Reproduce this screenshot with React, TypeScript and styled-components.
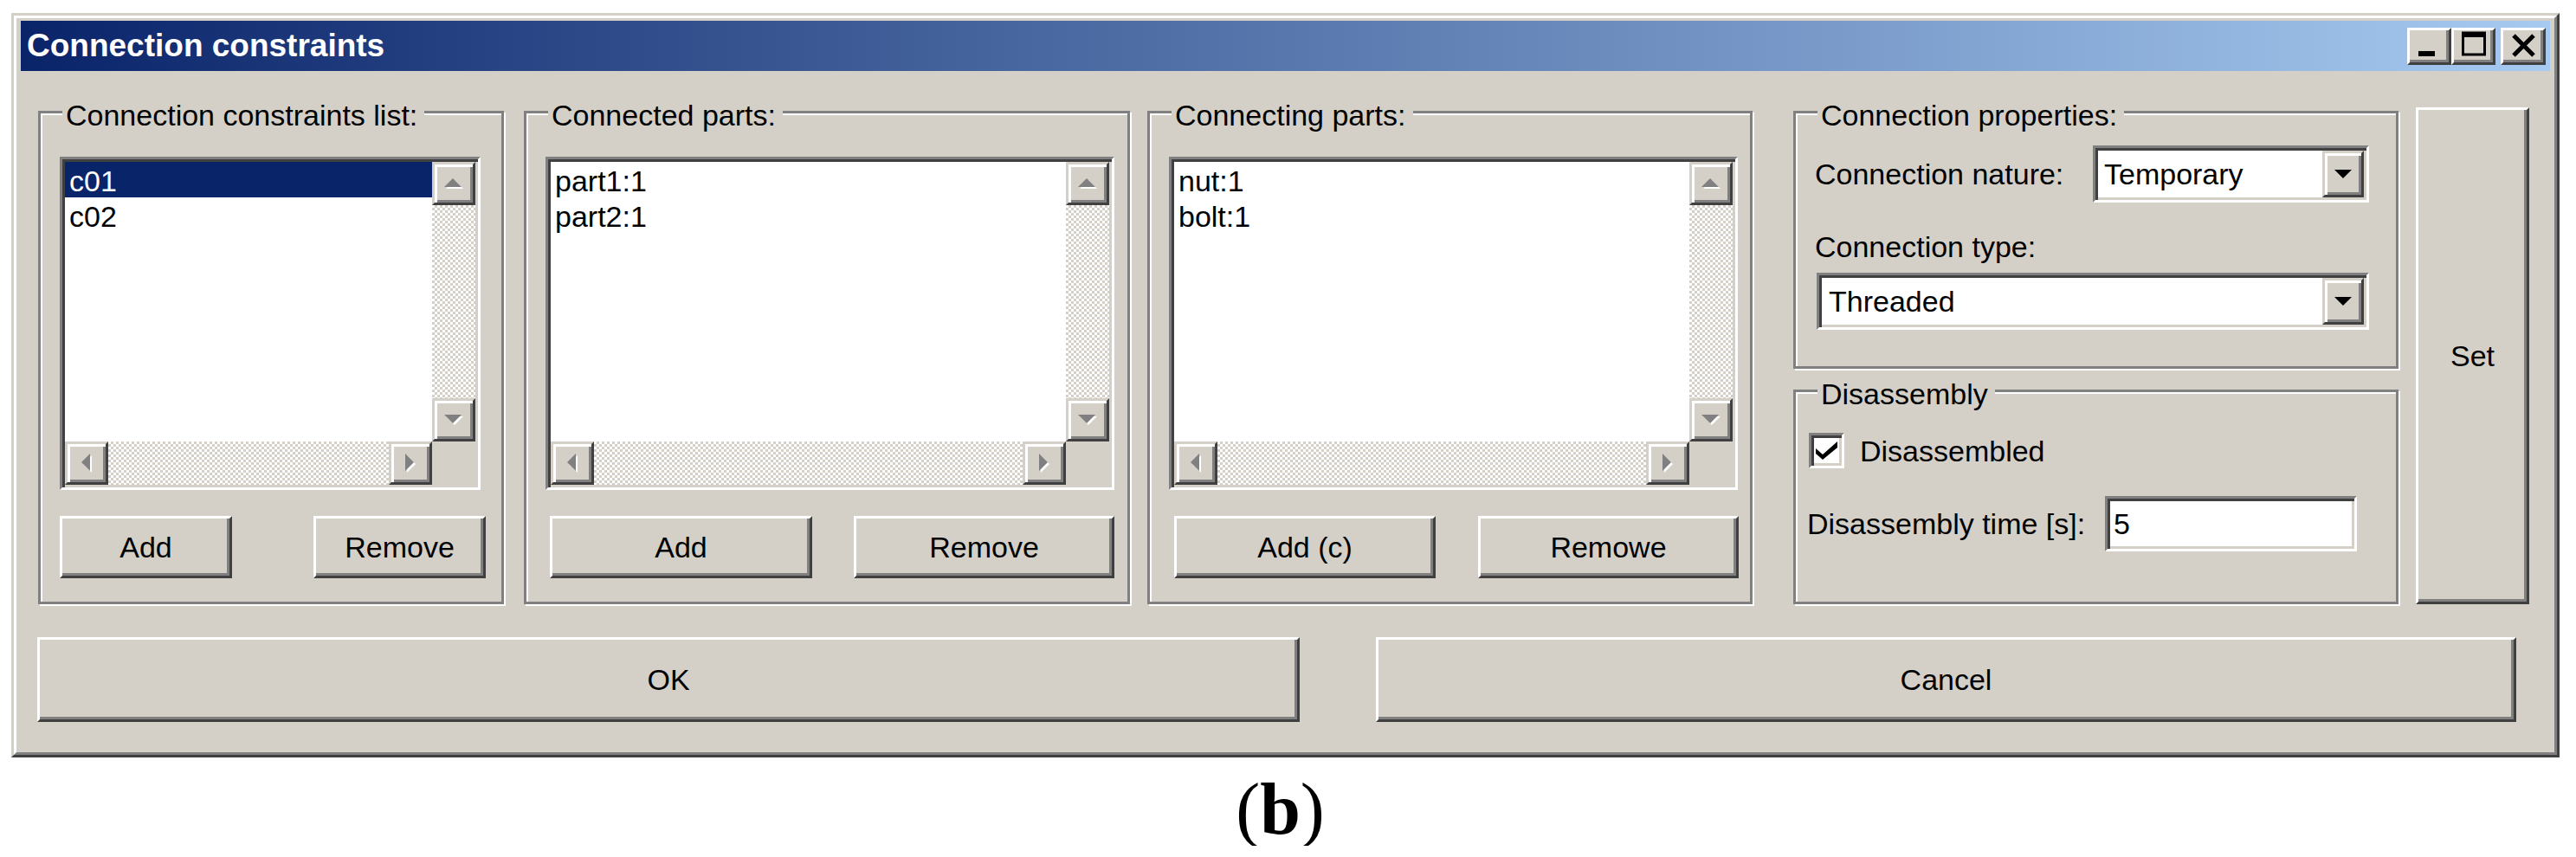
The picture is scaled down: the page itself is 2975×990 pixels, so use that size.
import React from 'react';
import styled, { createGlobalStyle, css } from 'styled-components';

const GlobalStyle = createGlobalStyle`
  html, body { margin: 0; padding: 0; background: #ffffff; }
  body { font-family: "Liberation Sans", Arial, sans-serif; font-size: 34px; color: #000; }
  * { box-sizing: border-box; }
`;

const raised = css`
  background: #d4d0c8;
  border: 3px solid;
  border-color: #ffffff #404040 #404040 #ffffff;
  box-shadow: inset -3px -3px 0 #808080;
`;

const raisedDfc = css`
  background: #d4d0c8;
  border: 3px solid;
  border-color: #d4d0c8 #404040 #404040 #d4d0c8;
  box-shadow: inset 3px 3px 0 #ffffff, inset -3px -3px 0 #808080;
`;

const sunken = css`
  border: 3px solid;
  border-color: #808080 #ffffff #ffffff #808080;
  box-shadow: inset 3px 3px 0 #404040, inset -3px -3px 0 #d4d0c8;
  padding: 3px;
  background: #ffffff;
`;

const Page = styled.div`
  display: flex;
  flex-direction: column;
  align-items: flex-start;
  padding: 15px 0 0 13px;
`;

const Win = styled.div`
  width: 2943px;
  height: 860px;
  border: 3px solid;
  border-color: #d4d0c8 #404040 #404040 #d4d0c8;
`;

const Frame = styled.div`
  height: 100%;
  border: 3px solid;
  border-color: #ffffff #808080 #808080 #ffffff;
  background: #d4d0c8;
  padding: 3px 5px 0 5px;
  display: flex;
  flex-direction: column;
`;

const TitleBar = styled.div`
  flex: none;
  height: 58px;
  background: linear-gradient(to right, #0a246a, #a6caf0);
  display: flex;
  align-items: center;
  justify-content: space-between;
  padding: 0 5px 0 7px;
`;

const TitleText = styled.div`
  font-weight: bold;
  font-size: 37px;
  line-height: 40px;
  color: #ffffff;
  white-space: nowrap;
`;

const TitleButtons = styled.div`
  display: flex;
  align-items: center;
`;

const TitleBtn = styled.div<{ $w: number; $ml?: number }>`
  ${raised};
  width: ${(p) => p.$w}px;
  height: 43px;
  margin-left: ${(p) => p.$ml ?? 0}px;
  svg { display: block; }
`;

const Content = styled.div`
  flex: 1;
  display: flex;
  flex-direction: column;
  padding-left: 20px;
`;

const TopRow = styled.div`
  display: flex;
  align-items: flex-start;
  margin-top: 42px;
  height: 574px;
`;

const Group = styled.div<{ $w: number; $h: number; $ml?: number; $mt?: number; $pad: string }>`
  position: relative;
  flex: none;
  width: ${(p) => p.$w}px;
  height: ${(p) => p.$h}px;
  margin-left: ${(p) => p.$ml ?? 0}px;
  margin-top: ${(p) => p.$mt ?? 0}px;
  border: 3px solid #808080;
  box-shadow: inset 2px 2px 0 #ffffff, 2px 2px 0 #ffffff;
  padding: ${(p) => p.$pad};
`;

const Legend = styled.span`
  position: absolute;
  top: -18px;
  left: 25px;
  padding: 0 8px 0 4px;
  background: #d4d0c8;
  line-height: 40px;
  white-space: nowrap;
`;

const ListBox = styled.div<{ $w: number }>`
  ${sunken};
  width: ${(p) => p.$w}px;
  height: 385px;
  display: grid;
  grid-template-columns: 1fr 50px;
  grid-template-rows: 1fr 50px;
`;

const Items = styled.div`
  overflow: hidden;
`;

const Item = styled.div<{ $sel?: boolean }>`
  height: 41px;
  padding: 4px 0 0 5px;
  line-height: 37px;
  white-space: nowrap;
  background: ${(p) => (p.$sel ? '#0a246a' : 'transparent')};
  color: ${(p) => (p.$sel ? '#ffffff' : '#000000')};
`;

const VScroll = styled.div`
  display: flex;
  flex-direction: column;
`;

const HScroll = styled.div`
  display: flex;
`;

const Track = styled.div`
  flex: 1;
  background-color: #ffffff;
  background-image: repeating-conic-gradient(#d4d0c8 0 25%, #ffffff 0 50%);
  background-size: 6px 6px;
`;

const ScrollBtn = styled.div`
  ${raisedDfc};
  flex: none;
  width: 50px;
  height: 50px;
  display: flex;
  align-items: center;
  justify-content: center;
`;

const Corner = styled.div`
  background: #d4d0c8;
`;

const ButtonRow = styled.div<{ $w: number; $ml?: number }>`
  display: flex;
  justify-content: space-between;
  margin-top: 30px;
  margin-left: ${(p) => p.$ml ?? 0}px;
  width: ${(p) => p.$w}px;
`;

const PushButton = styled.div<{ $w: number; $h: number; $ml?: number }>`
  ${raised};
  flex: none;
  width: ${(p) => p.$w}px;
  height: ${(p) => p.$h}px;
  margin-left: ${(p) => p.$ml ?? 0}px;
  display: flex;
  align-items: center;
  justify-content: center;
  white-space: nowrap;
`;

const RightCol = styled.div`
  flex: none;
  display: flex;
  flex-direction: column;
  margin-left: 47px;
  margin-top: 4px;
  gap: 24px;
`;

const FieldRow = styled.div<{ $mt?: number; $ml?: number }>`
  display: flex;
  align-items: center;
  margin-top: ${(p) => p.$mt ?? 0}px;
  margin-left: ${(p) => p.$ml ?? 0}px;
`;

const FieldLabel = styled.div<{ $w?: number; $mt?: number }>`
  flex: none;
  width: ${(p) => (p.$w ? `${p.$w}px` : 'auto')};
  margin-top: ${(p) => p.$mt ?? 0}px;
  line-height: 40px;
  white-space: nowrap;
`;

const Combo = styled.div<{ $w: number; $mt?: number; $ml?: number }>`
  ${sunken};
  flex: none;
  width: ${(p) => p.$w}px;
  height: 66px;
  margin-top: ${(p) => p.$mt ?? 0}px;
  margin-left: ${(p) => p.$ml ?? 0}px;
  display: flex;
`;

const ComboText = styled.div<{ $pl: number }>`
  flex: 1;
  display: flex;
  align-items: center;
  padding-left: ${(p) => p.$pl}px;
  white-space: nowrap;
`;

const DropBtn = styled.div`
  ${raisedDfc};
  flex: none;
  width: 48px;
  display: flex;
  align-items: center;
  justify-content: center;
`;

const CheckBox = styled.div`
  ${sunken};
  flex: none;
  width: 41px;
  height: 41px;
  display: flex;
  align-items: center;
  justify-content: center;
`;

const CheckLabel = styled.div`
  margin-left: 18px;
  line-height: 40px;
`;

const TextBox = styled.div`
  ${sunken};
  flex: none;
  width: 291px;
  height: 64px;
  display: flex;
  align-items: center;
  padding-left: 7px;
`;

const BottomRow = styled.div`
  display: flex;
  margin-top: 38px;
`;

const Caption = styled.div`
  width: 2943px;
  margin-top: 18px;
  padding-right: 12px;
  text-align: center;
  font-family: "Liberation Serif", "Times New Roman", serif;
  font-size: 84px;
  line-height: 84px;
  b { font-weight: bold; }
`;

type Dir = 'up' | 'down' | 'left' | 'right';

const arrowPts: Record<Dir, { vb: string; w: number; h: number; g: string; s: string }> = {
  up: { vb: '0 0 24 14', w: 24, h: 14, g: '1,11 11,1 21,11', s: '3,13 13,3 23,13' },
  down: { vb: '0 0 24 14', w: 24, h: 14, g: '1,1 21,1 11,11', s: '3,3 23,3 13,13' },
  left: { vb: '0 0 14 24', w: 14, h: 24, g: '11,1 11,21 1,11', s: '13,3 13,23 3,13' },
  right: { vb: '0 0 14 24', w: 14, h: 24, g: '1,1 1,21 11,11', s: '3,3 3,23 13,13' },
};

const Arrow = ({ dir }: { dir: Dir }) => {
  const a = arrowPts[dir];
  return (
    <svg width={a.w} height={a.h} viewBox={a.vb}>
      <polygon points={a.s} fill="#ffffff" />
      <polygon points={a.g} fill="#808080" />
    </svg>
  );
};

const DropArrow = () => (
  <svg width="20" height="11" viewBox="0 0 20 11">
    <polygon points="0,0 20,0 10,10" fill="#000000" />
  </svg>
);

const List = ({ w, items, sel }: { w: number; items: string[]; sel?: number }) => (
  <ListBox $w={w}>
    <Items>
      {items.map((t, i) => (
        <Item key={t} $sel={i === sel}>
          {t}
        </Item>
      ))}
    </Items>
    <VScroll>
      <ScrollBtn>
        <Arrow dir="up" />
      </ScrollBtn>
      <Track />
      <ScrollBtn>
        <Arrow dir="down" />
      </ScrollBtn>
    </VScroll>
    <HScroll>
      <ScrollBtn>
        <Arrow dir="left" />
      </ScrollBtn>
      <Track />
      <ScrollBtn>
        <Arrow dir="right" />
      </ScrollBtn>
    </HScroll>
    <Corner />
  </ListBox>
);

export default function App() {
  return (
    <>
      <GlobalStyle />
      <Page>
        <Win>
          <Frame>
            <TitleBar>
              <TitleText>Connection constraints</TitleText>
              <TitleButtons>
                <TitleBtn $w={51}>
                  <svg width="45" height="37" viewBox="0 0 45 37">
                    <rect x="10" y="24" width="19" height="6" fill="#000" />
                  </svg>
                </TitleBtn>
                <TitleBtn $w={51}>
                  <svg width="45" height="37" viewBox="0 0 45 37">
                    <rect x="10.5" y="3" width="25" height="25" fill="none" stroke="#000" strokeWidth="3" />
                    <rect x="9" y="2" width="28" height="6" fill="#000" />
                  </svg>
                </TitleBtn>
                <TitleBtn $w={52} $ml={6}>
                  <svg width="46" height="37" viewBox="0 0 46 37">
                    <path d="M12 6 L35 29 M35 6 L12 29" stroke="#000" strokeWidth="5" />
                  </svg>
                </TitleBtn>
              </TitleButtons>
            </TitleBar>
            <Content>
              <TopRow>
                <Group $w={538} $h={570} $mt={4} $pad="50px 0 0 22px">
                  <Legend>Connection constraints list:</Legend>
                  <List w={486} items={['c01', 'c02']} sel={0} />
                  <ButtonRow $w={492}>
                    <PushButton $w={199} $h={72}>Add</PushButton>
                    <PushButton $w={199} $h={72}>Remove</PushButton>
                  </ButtonRow>
                </Group>
                <Group $w={700} $h={570} $mt={4} $ml={23} $pad="50px 0 0 22px">
                  <Legend>Connected parts:</Legend>
                  <List w={657} items={['part1:1', 'part2:1']} />
                  <ButtonRow $w={652} $ml={5}>
                    <PushButton $w={303} $h={72}>Add</PushButton>
                    <PushButton $w={301} $h={72}>Remove</PushButton>
                  </ButtonRow>
                </Group>
                <Group $w={699} $h={570} $mt={4} $ml={20} $pad="50px 0 0 22px">
                  <Legend>Connecting parts:</Legend>
                  <List w={657} items={['nut:1', 'bolt:1']} />
                  <ButtonRow $w={652} $ml={6}>
                    <PushButton $w={302} $h={72}>Add (c)</PushButton>
                    <PushButton $w={301} $h={72}>Remowe</PushButton>
                  </ButtonRow>
                </Group>
                <RightCol>
                  <Group $w={699} $h={298} $pad="37px 0 0 22px">
                    <Legend>Connection properties:</Legend>
                    <FieldRow>
                      <FieldLabel $w={321}>Connection nature:</FieldLabel>
                      <Combo $w={319}>
                        <ComboText $pl={7}>Temporary</ComboText>
                        <DropBtn>
                          <DropArrow />
                        </DropBtn>
                      </Combo>
                    </FieldRow>
                    <FieldLabel $mt={31}>Connection type:</FieldLabel>
                    <Combo $w={638} $mt={10} $ml={2}>
                      <ComboText $pl={8}>Threaded</ComboText>
                      <DropBtn>
                        <DropArrow />
                      </DropBtn>
                    </Combo>
                  </Group>
                  <Group $w={699} $h={248} $pad="47px 0 0 15px">
                    <Legend>Disassembly</Legend>
                    <FieldRow>
                      <CheckBox>
                        <svg width="25" height="21" viewBox="0 0 25 21">
                          <polygon points="0,8 8,15 25,0 25,7 8,21 0,14" fill="#000" />
                        </svg>
                      </CheckBox>
                      <CheckLabel>Disassembled</CheckLabel>
                    </FieldRow>
                    <FieldRow $mt={32} $ml={-2}>
                      <FieldLabel $w={344}>Disassembly time [s]:</FieldLabel>
                      <TextBox>5</TextBox>
                    </FieldRow>
                  </Group>
                </RightCol>
                <PushButton $w={131} $h={574} $ml={20}>
                  Set
                </PushButton>
              </TopRow>
              <BottomRow>
                <PushButton $w={1458} $h={98} $ml={-1}>
                  OK
                </PushButton>
                <PushButton $w={1317} $h={98} $ml={88}>
                  Cancel
                </PushButton>
              </BottomRow>
            </Content>
          </Frame>
        </Win>
        <Caption>
          (<b>b</b>)
        </Caption>
      </Page>
    </>
  );
}
